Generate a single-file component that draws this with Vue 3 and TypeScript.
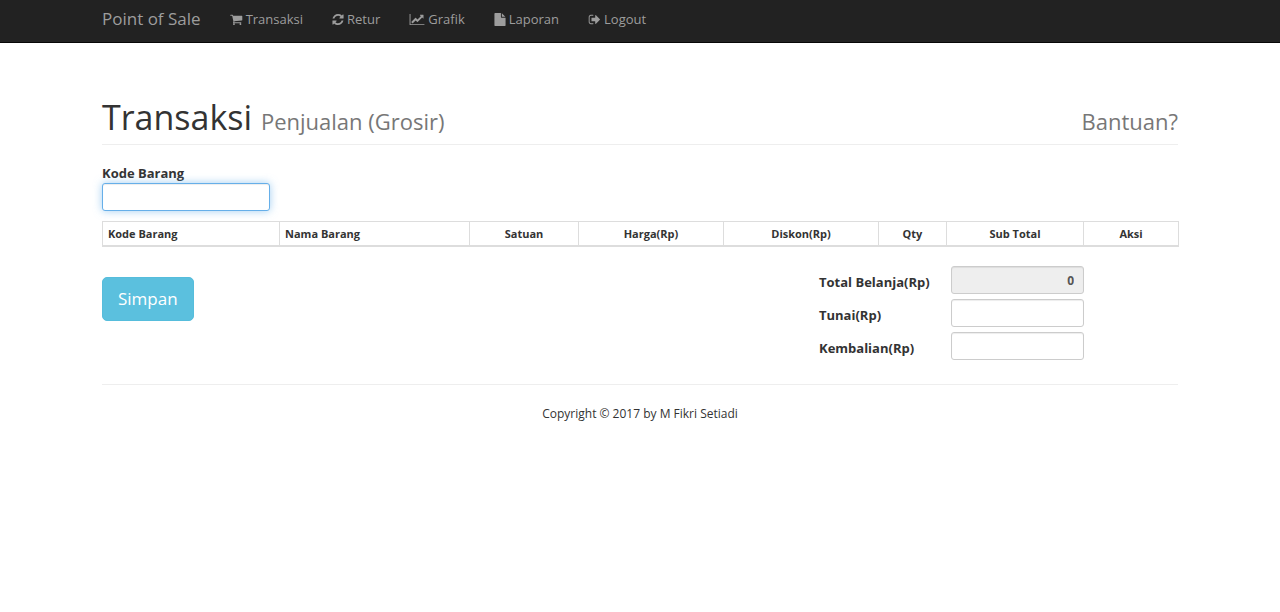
<script setup lang="ts">
import { onMounted, ref } from 'vue'

interface NavItem {
  label: string
  viewBox: string
  width: number
  path: string
}

interface Column {
  label: string
  width: number
  left?: boolean
}

const navItems: NavItem[] = [
  {
    label: 'Transaksi',
    viewBox: '64 0 1728 1792',
    width: 13,
    path: 'M704 1536q0 52-38 90t-90 38-90-38-38-90 38-90 90-38 90 38 38 90zm896 0q0 52-38 90t-90 38-90-38-38-90 38-90 90-38 90 38 38 90zm128-1088v512q0 24-16.5 42.5t-40.5 21.5l-1044 122q13 60 13 70 0 16-24 64h920q26 0 45 19t19 45-19 45-45 19h-1024q-26 0-45-19t-19-45q0-11 8-31.5t16-36 21.5-40 15.5-29.5l-177-823h-204q-26 0-45-19t-19-45 19-45 45-19h256q16 0 28.5 6.5t19.5 15.5 13 24.5 8 26 5.5 29.5 4.5 26h1201q26 0 45 19t19 45z',
  },
  {
    label: 'Retur',
    viewBox: '128 0 1536 1792',
    width: 12,
    path: 'M1639 1056q0 5-1 7-64 268-268 434.5t-478 166.5q-146 0-282.5-55t-243.5-157l-129 129q-19 19-45 19t-45-19-19-45v-448q0-26 19-45t45-19h448q26 0 45 19t19 45-19 45l-137 137q71 66 161 102t187 36q134 0 250-65t186-179q11-17 53-117 8-23 30-23h192q13 0 22.5 9.5t9.5 22.5zm25-800v448q0 26-19 45t-45 19h-448q-26 0-45-19t-19-45 19-45l138-138q-148-137-349-137-134 0-250 65t-186 179q-11 17-53 117-8 23-30 23h-199q-13 0-22.5-9.5t-9.5-22.5v-7q65-268 270-434.5t480-166.5q146 0 284 55.5t245 156.5l130-129q19-19 45-19t45 19 19 45z',
  },
  {
    label: 'Grafik',
    viewBox: '0 0 2048 1792',
    width: 16,
    path: 'M2048 1536v128h-2048v-1536h128v1408h1920zm-128-1248v435q0 21-19.5 29.5t-35.5-7.5l-121-121-633 633q-10 10-23 10t-23-10l-233-233-416 416-192-192 585-585q10-10 23-10t23 10l233 233 464-464-121-121q-16-16-7.5-35.5t29.5-19.5h435q14 0 23 9t9 23z',
  },
  {
    label: 'Laporan',
    viewBox: '128 0 1536 1792',
    width: 12,
    path: 'M1152 512v-472q22 14 36 28l408 408q14 14 28 36h-472zm-128 32q0 40 28 68t68 28h544v1056q0 40-28 68t-68 28h-1344q-40 0-68-28t-28-68v-1600q0-40 28-68t68-28h800v544z',
  },
  {
    label: 'Logout',
    viewBox: '64 0 1600 1792',
    width: 13,
    path: 'M704 1440q0 4 1 20t.5 26.5-3 23.5-10 19.5-20.5 6.5h-320q-119 0-203.5-84.5t-84.5-203.5v-704q0-119 84.5-203.5t203.5-84.5h320q13 0 22.5 9.5t9.5 22.5q0 4 1 20t.5 26.5-3 23.5-10 19.5-20.5 6.5h-320q-66 0-113 47t-47 113v704q0 66 47 113t113 47h312l11.5 1 11.5 3 8 5.5 7 9 2 13.5zm928-544q0 26-19 45l-544 544q-19 19-45 19t-45-19-19-45v-288h-448q-26 0-45-19t-19-45v-384q0-26 19-45t45-19h448v-288q0-26 19-45t45-19 45 19l544 544q19 19 19 45z',
  },
]

const columns: Column[] = [
  { label: 'Kode Barang', width: 177, left: true },
  { label: 'Nama Barang', width: 190, left: true },
  { label: 'Satuan', width: 109 },
  { label: 'Harga(Rp)', width: 145 },
  { label: 'Diskon(Rp)', width: 155 },
  { label: 'Qty', width: 68 },
  { label: 'Sub Total', width: 137 },
  { label: 'Aksi', width: 95 },
]

const code = ref('')
const total = ref('0')
const cash = ref('')
const change = ref('')
const codeInput = ref<HTMLInputElement | null>(null)

onMounted(() => codeInput.value?.focus())
</script>

<template>
  <div class="page">
    <header class="navbar">
      <nav class="container nav">
        <a class="brand" href="#">Point of Sale</a>
        <a v-for="item in navItems" :key="item.label" class="nav-link" href="#">
          <svg :viewBox="item.viewBox" :width="item.width" height="13" aria-hidden="true">
            <path :d="item.path" fill="currentColor" />
          </svg>
          <span>{{ item.label }}</span>
        </a>
      </nav>
    </header>

    <main class="container">
      <div class="page-header">
        <h1>Transaksi <small>Penjualan (Grosir)</small></h1>
        <a class="help" href="#">Bantuan?</a>
      </div>

      <form @submit.prevent>
        <div class="code-field">
          <label for="code">Kode Barang</label>
          <input id="code" ref="codeInput" v-model="code" class="control" type="text" autocomplete="off" />
        </div>

        <table>
          <colgroup>
            <col v-for="c in columns" :key="c.label" :style="{ width: c.width + 'px' }" />
          </colgroup>
          <thead>
            <tr>
              <th v-for="c in columns" :key="c.label" scope="col" :class="{ left: c.left }">{{ c.label }}</th>
            </tr>
          </thead>
        </table>

        <div class="summary">
          <button type="submit">Simpan</button>
          <div class="totals">
            <label for="total">Total Belanja(Rp)</label>
            <input id="total" v-model="total" class="control" type="text" readonly />
            <label for="cash">Tunai(Rp)</label>
            <input id="cash" v-model="cash" class="control" type="text" />
            <label for="change">Kembalian(Rp)</label>
            <input id="change" v-model="change" class="control" type="text" />
          </div>
        </div>
      </form>

      <footer>Copyright © 2017 by M Fikri Setiadi</footer>
    </main>
  </div>
</template>

<style>
body {
  margin: 0;
  background: #fff;
}
</style>

<style scoped>
.page {
  font-family: 'Open Sans', 'Noto Sans', sans-serif;
  font-size: 13px;
  line-height: 20px;
  color: #333;
}

.page * {
  box-sizing: border-box;
}

.container {
  max-width: 1108px;
  margin: 0 auto;
  padding: 0 16px;
}

.navbar {
  background: #222;
  border-bottom: 1px solid #080808;
}

.nav {
  display: flex;
  align-items: flex-start;
  gap: 29px;
  height: 42px;
  padding-top: 9px;
}

.brand,
.nav-link {
  color: #9d9d9d;
  text-decoration: none;
  white-space: nowrap;
}

.brand {
  font-size: 17px;
}

.nav-link {
  display: flex;
  align-items: center;
  gap: 3px;
}

.page-header {
  display: flex;
  align-items: baseline;
  justify-content: space-between;
  margin-top: 55px;
  padding-bottom: 8px;
  border-bottom: 1px solid #eee;
}

h1 {
  margin: 0;
  font-size: 34px;
  font-weight: 400;
  line-height: 38px;
}

h1 small,
.help {
  font-size: 22px;
  line-height: 22px;
  color: #777;
}

.help {
  text-decoration: none;
}

label {
  font-weight: 700;
}

.code-field {
  display: flex;
  flex-direction: column;
  width: 168px;
  margin-top: 18px;
}

.control {
  width: 100%;
  height: 28px;
  padding: 4px 9px;
  font: inherit;
  font-size: 12px;
  color: #555;
  background: #fff;
  border: 1px solid #ccc;
  border-radius: 3px;
  outline: none;
  box-shadow: inset 0 1px 1px rgba(0, 0, 0, 0.075);
}

.control:focus {
  border-color: #66afe9;
  box-shadow: inset 0 1px 1px rgba(0, 0, 0, 0.075), 0 0 8px rgba(102, 175, 233, 0.6);
}

.control[readonly] {
  background: #eee;
  font-weight: 700;
  text-align: right;
}

table {
  width: 100%;
  margin-top: 10px;
  table-layout: fixed;
  border-collapse: collapse;
  border: 1px solid #ddd;
}

th {
  padding: 4px 5px;
  font-size: 11px;
  font-weight: 700;
  line-height: 15px;
  text-align: center;
  border: 1px solid #ddd;
  border-bottom-width: 2px;
}

th.left {
  text-align: left;
}

.summary {
  display: flex;
  align-items: flex-start;
  justify-content: space-between;
  margin-top: 19px;
  padding-right: 94px;
}

button {
  height: 44px;
  margin-top: 11px;
  padding: 0 15px;
  font: inherit;
  font-size: 17px;
  color: #fff;
  background: #5bc0de;
  border: 1px solid #56bddc;
  border-radius: 5px;
}

.totals {
  display: grid;
  grid-template-columns: 132px 133px;
  row-gap: 5px;
}

.totals label {
  padding-top: 6px;
}

footer {
  margin-top: 24px;
  padding-top: 19px;
  font-size: 12px;
  text-align: center;
  border-top: 1px solid #eee;
}
</style>
